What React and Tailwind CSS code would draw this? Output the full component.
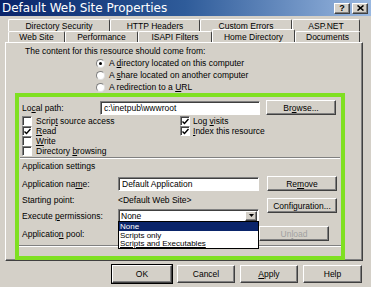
import React from 'react';

const raised =
  'border border-t-white border-l-white border-r-[#404040] border-b-[#404040] shadow-[inset_-1px_-1px_0_#808080]';
const sunken =
  'border border-t-[#808080] border-l-[#808080] border-r-white border-b-white shadow-[inset_1px_1px_0_#404040]';

const Check = ({ on }) => (
  <span className={`w-[10px] h-[10px] bg-white flex items-center justify-center shrink-0 ${sunken}`}>
    {on && (
      <svg width="7" height="7" viewBox="0 0 7 7">
        <path d="M0.5 3.5 L2.5 5.5 L6.5 1" stroke="#000" strokeWidth="1.4" fill="none" />
      </svg>
    )}
  </span>
);

const Radio = ({ on }) => (
  <span className="w-[9px] h-[9px] rounded-full bg-white border border-t-[#808080] border-l-[#808080] border-r-[#e0e0e0] border-b-[#e0e0e0] flex items-center justify-center shrink-0">
    {on && <span className="w-[3px] h-[3px] rounded-full bg-black" />}
  </span>
);

const Btn = ({ children, className = '', disabled }) => (
  <div
    className={`h-[15px] flex items-center justify-center bg-[#d4d0c8] ${raised} ${
      disabled ? 'text-[#a0a0a0]' : 'text-black'
    } ${className}`}
  >
    {children}
  </div>
);

const Tab = ({ w, children, active }) => (
  <div
    className={`h-full flex items-center justify-center border-t border-l border-t-white border-l-white border-r border-r-[#404040] rounded-t-[2px] ${
      active ? 'bg-[#d4d0c8]' : ''
    }`}
    style={{ width: w }}
  >
    {children}
  </div>
);

export default function App() {
  return (
    <div className="w-[371px] h-[287px] bg-[#d4d0c8] overflow-hidden flex flex-col font-['Liberation_Sans',Arial,sans-serif] text-[8.5px] leading-[10px] text-black">
      {/* title bar */}
      <div className="h-[16px] shrink-0 flex items-center bg-gradient-to-r from-[#0a246a] via-[#2f5c9a] to-[#9ab8e0] pl-[2px] pr-[3px]">
        <span className="text-white text-[12px] leading-[14px] font-['DejaVu_Sans',sans-serif]">
          Default Web Site Properties
        </span>
        <div className="ml-auto flex gap-[2px]">
          <div className={`w-[16px] h-[11px] bg-[#d4d0c8] flex items-center justify-center text-[9px] font-bold leading-none ${raised}`}>?</div>
          <div className={`w-[16px] h-[11px] bg-[#d4d0c8] flex items-center justify-center ${raised}`}>
            <svg width="7" height="6" viewBox="0 0 7 6">
              <path d="M0.5 0.5 L6.5 5.5 M6.5 0.5 L0.5 5.5" stroke="#000" strokeWidth="1.6" />
            </svg>
          </div>
        </div>
      </div>

      {/* tabs */}
      <div className="mt-[3px] ml-[8px] h-[12px] flex">
        <Tab w={102}>Directory Security</Tab>
        <Tab w={90}>HTTP Headers</Tab>
        <Tab w={92}>Custom Errors</Tab>
        <Tab w={68}>ASP.NET</Tab>
      </div>
      <div className="ml-[8px] h-[11px] flex relative z-10">
        <Tab w={57}>Web Site</Tab>
        <Tab w={73}>Performance</Tab>
        <Tab w={74}>ISAPI Filters</Tab>
        <div className="w-[83px] h-[13px] -mt-[2px] flex items-start pt-[2px] justify-center bg-[#d4d0c8] border-t border-l border-r border-t-white border-l-white border-r-[#404040] rounded-t-[2px]">
          Home Directory
        </div>
        <Tab w={65}>Documents</Tab>
      </div>

      {/* panel */}
      <div className="ml-[5px] w-[358px] h-[219px] shrink-0 border border-t-white border-l-white border-r-[#404040] border-b-[#404040] shadow-[inset_-1px_-1px_0_#808080] flex flex-col">
        <div className="pl-[19px] mt-[3px] h-[10px]">The content for this resource should come from:</div>
        <div className="pl-[90px] mt-[2px] flex flex-col gap-[2px]">
          {[
            [<>A <u>d</u>irectory located on this computer</>, true],
            [<>A <u>s</u>hare located on another computer</>, false],
            [<>A redirection to a <u>U</u>RL</>, false],
          ].map(([t, on], i) => (
            <div key={i} className="h-[10px] flex items-center gap-[4px]">
              <Radio on={on} />
              <span>{t}</span>
            </div>
          ))}
        </div>

        {/* green highlight box */}
        <div className="ml-[9px] mt-[1px] w-[330px] h-[168px] border-[4px] border-[#7fe021] flex flex-col">
          <div className="mt-[2px] h-[17px] flex items-center pl-[3px]">
            <span className="w-[78px]">Lo<u>c</u>al path:</span>
            <div className={`w-[160px] h-[14px] bg-white flex items-center pl-[3px] ${sunken}`}>c:\inetpub\wwwroot</div>
            <Btn className="ml-[6px] w-[70px]">Br<u>o</u>wse...</Btn>
          </div>

          <div className="pl-[3px] flex">
            <div className="w-[158px] flex flex-col">
              {[
                [<>Scrip<u>t</u> source access</>, false],
                [<><u>R</u>ead</>, true],
                [<><u>W</u>rite</>, false],
                [<>Directory <u>b</u>rowsing</>, false],
              ].map(([t, on], i) => (
                <div key={i} className="h-[10px] flex items-center gap-[4px]">
                  <Check on={on} />
                  <span>{t}</span>
                </div>
              ))}
            </div>
            <div className="flex flex-col">
              {[
                [<>Log <u>v</u>isits</>, true],
                [<><u>I</u>ndex this resource</>, true],
              ].map(([t, on], i) => (
                <div key={i} className="h-[10px] flex items-center gap-[3px]">
                  <Check on={on} />
                  <span>{t}</span>
                </div>
              ))}
            </div>
          </div>

          <div className="mt-[1px] mx-[1px] h-[2px] border-t border-t-[#808080] border-b border-b-white" />
          <div className="pl-[3px] mt-[2px] h-[10px]">Application settings</div>

          <div className="mt-[5px] h-[15px] flex items-center pl-[3px]">
            <span className="w-[96px]">Application na<u>m</u>e:</span>
            <div className={`w-[141px] h-[14px] bg-white flex items-center pl-[3px] ${sunken}`}>Default Application</div>
            <Btn className="ml-[8px] w-[70px]">Re<u>m</u>ove</Btn>
          </div>

          <div className="mt-[1px] h-[15px] flex items-center pl-[3px]">
            <span className="w-[96px]">Starting point:</span>
            <span>&lt;Default Web Site&gt;</span>
          </div>

          <div className="h-[15px] flex items-start pl-[3px] relative">
            <span className="w-[96px] mt-[4px]">Execute <u>p</u>ermissions:</span>
            <div className="relative mt-[2px]">
              <div className={`w-[141px] h-[13px] bg-white flex items-center pl-[2px] ${sunken}`}>
                None
                <div className={`ml-auto mr-[1px] w-[12px] h-[10px] bg-[#d4d0c8] flex items-center justify-center ${raised}`}>
                  <svg width="5" height="3" viewBox="0 0 5 3">
                    <path d="M0 0 H5 L2.5 3 Z" fill="#000" />
                  </svg>
                </div>
              </div>
              <div className="absolute left-0 top-[12px] w-[141px] h-[28px] bg-white border border-black z-20 flex flex-col text-[8px] leading-[9px]">
                <div className="h-[9px] bg-[#0a246a] text-white flex items-center pl-[1px]">None</div>
                <div className="h-[8px] flex items-center pl-[1px]">Scripts only</div>
                <div className="h-[9px] flex items-center pl-[1px]"><u>Scripts and Executables</u></div>
              </div>
            </div>
            <Btn className="ml-[8px] -mt-[9px] w-[70px]">Confi<u>g</u>uration...</Btn>
          </div>

          <div className="mt-[4px] h-[15px] flex items-center pl-[3px]">
            <span className="w-[237px]">Applicatio<u>n</u> pool:</span>
            <Btn className="w-[70px]" disabled>Un<u>l</u>oad</Btn>
          </div>

          <div className="mt-[4px] h-[2px] border-t border-t-[#808080] border-b border-b-white" />
        </div>
      </div>

      {/* bottom buttons */}
      <div className="mt-[4px] ml-[112px] flex gap-[5px]">
        <Btn className="w-[60px] h-[18px] outline outline-1 outline-black">OK</Btn>
        <Btn className="w-[58px] h-[18px]">Cancel</Btn>
        <Btn className="w-[58px] h-[18px]"><u>A</u>pply</Btn>
        <Btn className="w-[59px] h-[18px]">Help</Btn>
      </div>
    </div>
  );
}
